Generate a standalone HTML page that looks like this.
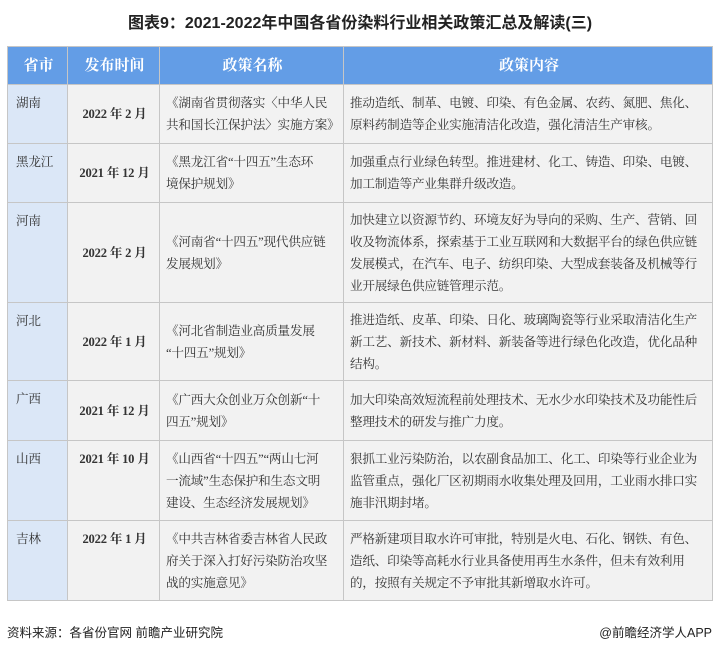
<!DOCTYPE html>
<html><head><meta charset="utf-8"><style>
body{margin:0;width:720px;height:652px;background:#fff;font-family:"Liberation Serif","Noto Serif CJK SC",serif;color:#333;position:relative;overflow:hidden}
.title{position:absolute;top:9px;left:0;width:720px;text-align:center;font:bold 16px "Liberation Sans","Noto Sans CJK SC",sans-serif;color:#222}
table{position:absolute;left:7px;top:46px;border-collapse:collapse;width:706px;table-layout:fixed;font-size:12.6px;letter-spacing:-0.2px}
td,th{border:1px solid #c6c6c6;line-height:22px;padding:0 4px 0 6px;background:#f2f2f2}
th{background:#639de6;color:#fff;font-weight:bold;font-size:15px;height:37px;text-align:center;letter-spacing:0}
td.p{background:#dbe7f7;vertical-align:top;padding-top:7px;padding-left:8px}
td.d{text-align:center;font-weight:bold}
td.n{text-align:left;padding:0 2px 0 6px;white-space:nowrap}
.foot{position:absolute;top:622px;font:12.5px "Liberation Sans","Noto Sans CJK SC",sans-serif;color:#222}
</style></head><body>
<div class="title">图表9：2021-2022年中国各省份染料行业相关政策汇总及解读(三)</div>
<table>
<colgroup><col style="width:60px"><col style="width:92px"><col style="width:184px"><col></colgroup>
<tr><th>省市</th><th>发布时间</th><th>政策名称</th><th>政策内容</th></tr>
<tr style="height:59px"><td class="p">湖南</td><td class="d">2022 年 2 月</td><td class="n">《湖南省贯彻落实〈中华人民<br>共和国长江保护法〉实施方案》</td><td>推动造纸、制革、电镀、印染、有色金属、农药、氮肥、焦化、原料药制造等企业实施清洁化改造，强化清洁生产审核。</td></tr>
<tr style="height:59px"><td class="p">黑龙江</td><td class="d">2021 年 12 月</td><td class="n">《黑龙江省“十四五”生态环<br>境保护规划》</td><td>加强重点行业绿色转型。推进建材、化工、铸造、印染、电镀、加工制造等产业集群升级改造。</td></tr>
<tr style="height:100px"><td class="p">河南</td><td class="d">2022 年 2 月</td><td class="n">《河南省“十四五”现代供应链<br>发展规划》</td><td>加快建立以资源节约、环境友好为导向的采购、生产、营销、回收及物流体系，探索基于工业互联网和大数据平台的绿色供应链发展模式，在汽车、电子、纺织印染、大型成套装备及机械等行业开展绿色供应链管理示范。</td></tr>
<tr style="height:78px"><td class="p">河北</td><td class="d">2022 年 1 月</td><td class="n">《河北省制造业高质量发展<br>“十四五”规划》</td><td>推进造纸、皮革、印染、日化、玻璃陶瓷等行业采取清洁化生产新工艺、新技术、新材料、新装备等进行绿色化改造，优化品种结构。</td></tr>
<tr style="height:60px"><td class="p">广西</td><td class="d">2021 年 12 月</td><td class="n">《广西大众创业万众创新“十<br>四五”规划》</td><td>加大印染高效短流程前处理技术、无水少水印染技术及功能性后整理技术的研发与推广力度。</td></tr>
<tr style="height:80px"><td class="p">山西</td><td class="d" style="vertical-align:top;padding-top:7px">2021 年 10 月</td><td class="n">《山西省“十四五”“两山七河<br>一流域”生态保护和生态文明<br>建设、生态经济发展规划》</td><td>狠抓工业污染防治，以农副食品加工、化工、印染等行业企业为监管重点，强化厂区初期雨水收集处理及回用，工业雨水排口实施非汛期封堵。</td></tr>
<tr style="height:80px"><td class="p">吉林</td><td class="d" style="vertical-align:top;padding-top:7px">2022 年 1 月</td><td class="n">《中共吉林省委吉林省人民政<br>府关于深入打好污染防治攻坚<br>战的实施意见》</td><td>严格新建项目取水许可审批，特别是火电、石化、钢铁、有色、造纸、印染等高耗水行业具备使用再生水条件，但未有效利用的，按照有关规定不予审批其新增取水许可。</td></tr>
</table>
<div class="foot" style="left:7px">资料来源：各省份官网 前瞻产业研究院</div>
<div class="foot" style="right:8px">@前瞻经济学人APP</div>
</body></html>
